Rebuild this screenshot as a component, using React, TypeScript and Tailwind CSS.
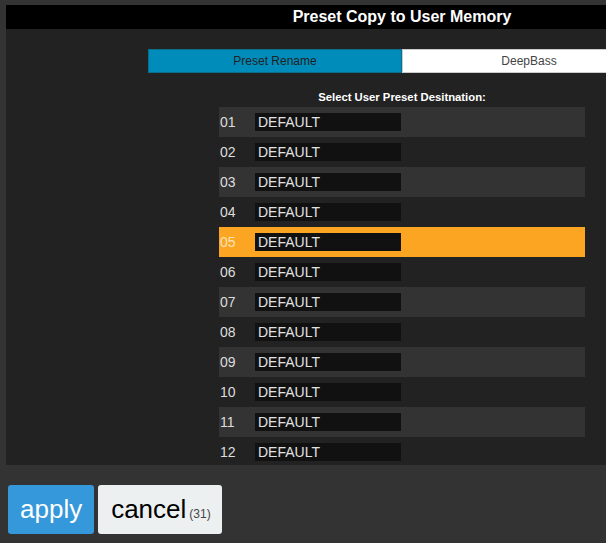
const presets = Array.from({ length: 12 }, (_, i) => ({
  id: String(i + 1).padStart(2, '0'),
  name: 'DEFAULT',
}))

const selected = '05'

export default function App() {
  return (
    <div className="w-[606px] h-[543px] overflow-hidden bg-[#333] font-['Liberation_Sans',Arial,sans-serif]">
      <div className="pt-[5px] pl-[6px]">
        <div className="w-[792px] h-[460px] bg-[#222] overflow-hidden">
          <div className="h-[24px] bg-black text-white font-bold text-[16px] flex items-center justify-center">
            Preset Copy to User Memory
          </div>

          <div className="mt-[20px] flex justify-center">
            <div className="w-[254px] h-[24px] bg-[#008cba] border border-[#0b6e8c] text-[#222] text-[12px] flex items-center justify-center">
              Preset Rename
            </div>
            <div className="w-[254px] h-[24px] bg-white border border-[#ccc] text-[#444] text-[12px] flex items-center justify-center">
              DeepBass
            </div>
          </div>

          <div className="mt-[16px] h-[16px] leading-[16px] text-center text-white font-bold text-[11.3px]">
            Select User Preset Desitnation:
          </div>

          <div className="mt-[2px] mx-auto w-[366px]">
            {presets.map((p, i) => {
              const active = p.id === selected
              const bg = active ? 'bg-[#fca523]' : i % 2 === 0 ? 'bg-[#333]' : 'bg-[#222]'
              return (
                <div key={p.id} className={`h-[30px] flex items-center text-[14px] ${bg}`}>
                  <span className={`w-[36px] pl-[1px] ${active ? 'text-[#fde3b6]' : 'text-[#ddd]'}`}>{p.id}</span>
                  <span className="w-[146px] h-[18px] leading-[18px] bg-[#111] pl-[3px] text-[#e2e2e2]">
                    {p.name}
                  </span>
                </div>
              )
            })}
          </div>
        </div>
      </div>

      <div className="mt-[20px] ml-[8px] flex gap-[4px]">
        <button className="h-[49px] px-[12px] rounded-[3px] bg-[#3498db] text-white text-[26px] flex items-center">
          apply
        </button>
        <button className="h-[49px] w-[124px] pl-[13px] rounded-[3px] bg-[#ecf0f1] text-black text-[26px] flex items-center">
          cancel
          <span className="ml-[3px] mt-[8px] text-[12px] text-[#444]">(31)</span>
        </button>
      </div>
    </div>
  )
}
